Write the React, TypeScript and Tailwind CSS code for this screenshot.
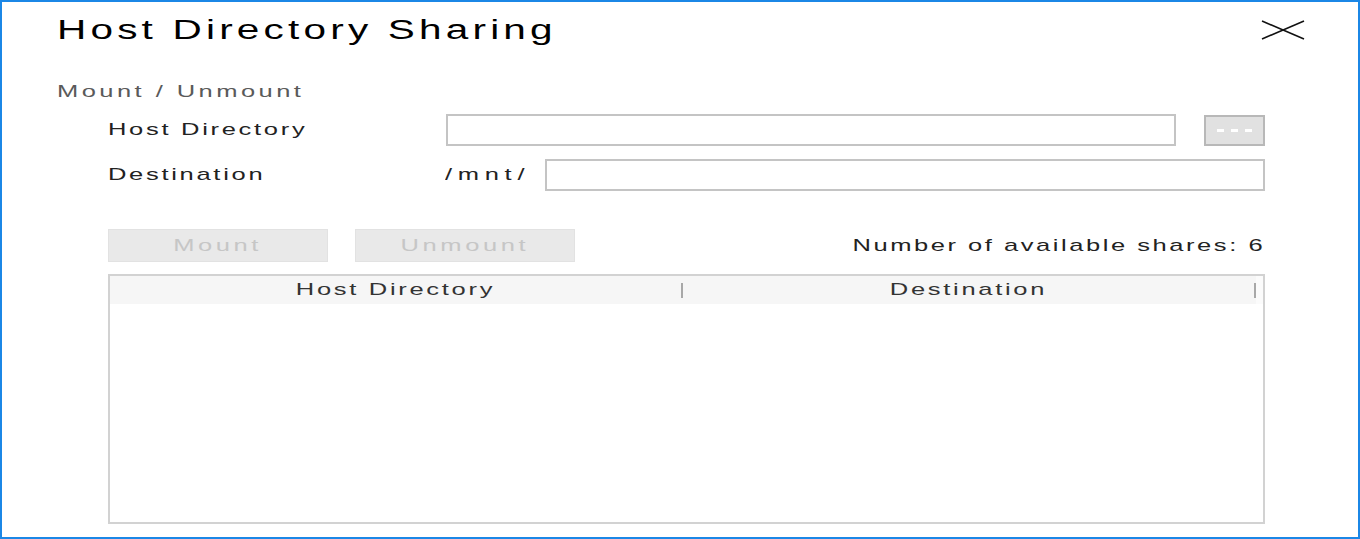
export default function App() {
  return (
    <div
      className="w-[1360px] h-[539px] border-2 border-[#1b87e6] bg-white flex flex-col text-[#222]"
      style={{ fontFamily: '"Liberation Sans", Arial, sans-serif' }}
    >
      {/* title bar */}
      <div className="h-[56px] flex items-center justify-between pl-[55px] pr-[53px]">
        <span className="inline-block origin-left scale-x-150 text-[27px] tracking-[2.8px] text-black">
          Host Directory Sharing
        </span>
        <svg width="44" height="20" viewBox="0 0 44 20" fill="none" stroke="#111" strokeWidth="1.6">
          <path d="M1 1L43 19" />
          <path d="M1 19L43 1" />
        </svg>
      </div>

      <div className="mt-[24px] h-[20px] flex items-center pl-[55px]">
        <span className="inline-block origin-left scale-x-150 text-[17px] tracking-[2.3px] text-[#5a5a5a]">
          Mount / Unmount
        </span>
      </div>

      <div className="pl-[106px] pr-[93px] flex flex-col">
        {/* host directory */}
        <div className="mt-[12px] h-[32px] flex items-center">
          <div className="w-[338px]">
            <span className="inline-block origin-left scale-x-150 text-[17px] tracking-[1.8px]">Host Directory</span>
          </div>
          <div className="flex-1 h-full border-2 border-[#c4c4c4] bg-white" />
          <button className="ml-[28px] w-[61px] h-[31px] border-2 border-[#b8b8b8] bg-[#e1e1e1] flex items-center justify-center gap-[7px]">
            <span className="w-[7px] h-[3px] bg-white" />
            <span className="w-[7px] h-[3px] bg-white" />
            <span className="w-[7px] h-[3px] bg-white" />
          </button>
        </div>

        {/* destination */}
        <div className="mt-[13px] h-[32px] flex items-center">
          <div className="w-[337px]">
            <span className="inline-block origin-left scale-x-150 text-[17px] tracking-[1.8px]">Destination</span>
          </div>
          <div className="w-[100px]">
            <span className="inline-block origin-left scale-x-150 text-[17px] tracking-[3.8px]">/mnt/</span>
          </div>
          <div className="flex-1 h-full border-2 border-[#c4c4c4] bg-white" />
        </div>

        {/* actions */}
        <div className="mt-[38px] h-[33px] flex items-center">
          <button className="w-[220px] h-full bg-[#e9e9e9] border border-[#e2e2e2] flex items-center justify-center">
            <span className="inline-block origin-center scale-x-150 text-[17px] tracking-[2.4px] text-[#c6c6c6]">Mount</span>
          </button>
          <button className="ml-[27px] w-[220px] h-full bg-[#e9e9e9] border border-[#e2e2e2] flex items-center justify-center">
            <span className="inline-block origin-center scale-x-150 text-[17px] tracking-[2.4px] text-[#c6c6c6]">Unmount</span>
          </button>
          <div className="flex-1 flex justify-end">
            <span className="inline-block origin-right scale-x-150 text-[17px] tracking-[1.7px]">
              Number of available shares: 6
            </span>
          </div>
        </div>

        {/* table */}
        <div className="mt-[12px] h-[250px] border-2 border-[#d2d2d2] bg-white flex flex-col">
          <div className="h-[28px] bg-[#f6f6f6] flex items-center">
            <div className="w-[571px] flex justify-center">
              <span className="inline-block origin-center scale-x-150 text-[17px] tracking-[1.8px] text-[#333]">Host Directory</span>
            </div>
            <div className="w-[2px] h-[15px] bg-[#a8a8a8]" />
            <div className="w-[571px] flex justify-center">
              <span className="inline-block origin-center scale-x-150 text-[17px] tracking-[1.8px] text-[#333]">Destination</span>
            </div>
            <div className="w-[2px] h-[15px] bg-[#a8a8a8]" />
            <div className="flex-1 h-full bg-[#fbfbfb]" />
          </div>
          <div className="flex-1" />
        </div>
      </div>
    </div>
  );
}
